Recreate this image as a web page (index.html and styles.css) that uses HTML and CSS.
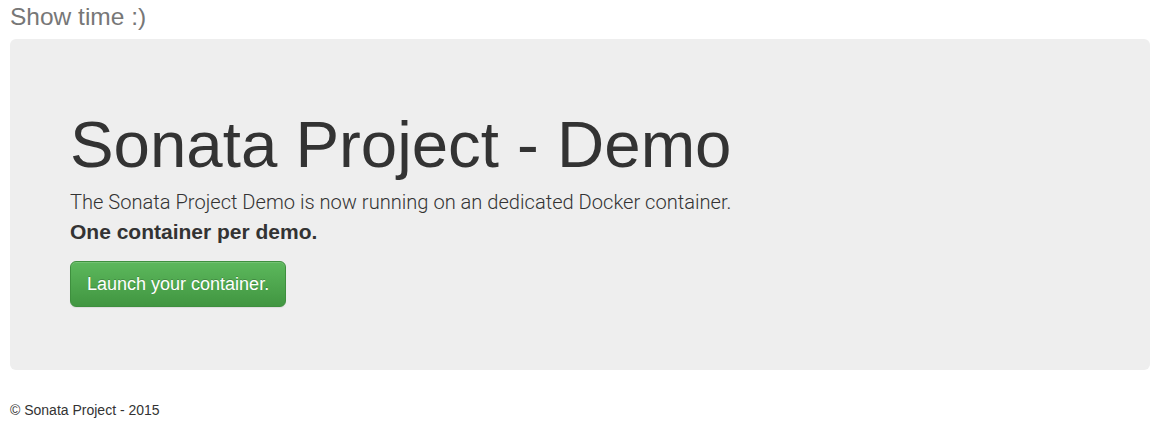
FILE: index.html
```html
<!DOCTYPE html>
<html lang="en">
<head>
<meta charset="utf-8">
<title>Sonata Project - Demo</title>
<link rel="stylesheet" href="styles.css">
</head>
<body>
<div class="page">
  <h3 class="page-title">Show time :)</h3>
  <div class="jumbotron">
    <h1 class="jumbotron-title">Sonata Project - Demo</h1>
    <p class="lead">The Sonata Project Demo is now running on an dedicated Docker container.<br><strong>One container per demo.</strong></p>
    <p class="actions"><a class="btn-launch" href="#">Launch your container.</a></p>
  </div>
  <footer class="footer">© Sonata Project - 2015</footer>
</div>
</body>
</html>
```
FILE: styles.css
```css
html, body {
  margin: 0;
  padding: 0;
  background: #fff;
}
body {
  font-family: "Liberation Sans", Arial, sans-serif;
  font-size: 14px;
  line-height: 20px;
  color: #333;
}
.page {
  width: 1140px;
  padding: 0 0 0 10px;
}
.page-title {
  margin: 0;
  padding-top: 4px;
  font-size: 24.5px;
  line-height: 26px;
  font-weight: normal;
  color: #777;
  margin-bottom: 9px;
}
.jumbotron {
  background: #eeeeee;
  border-radius: 6px;
  padding: 48px 60px;
  margin-bottom: 30px;
}
.jumbotron-title {
  margin: 22px 0 7px;
  font-size: 65.4px;
  line-height: 71px;
  font-weight: normal;
  color: #333;
}
.lead {
  margin: 0 0 14px;
  font-family: "Roboto", "Liberation Sans", sans-serif;
  font-weight: 300;
  font-size: 20.1px;
  line-height: 30px;
  color: #333;
}
.lead strong {
  font-family: "Liberation Sans", Arial, sans-serif;
  font-size: 21px;
  font-weight: bold;
}
.actions {
  margin: 0 0 15px;
}
.btn-launch {
  display: inline-block;
  padding: 10px 16px;
  font-size: 18px;
  line-height: 24px;
  color: #fff;
  text-decoration: none;
  border: 1px solid #3e8f3e;
  border-radius: 6px;
  background-image: linear-gradient(to bottom, #5cb85c 0%, #419641 100%);
  text-shadow: 0 -1px 0 rgba(0, 0, 0, 0.2);
  box-shadow: inset 0 1px 0 rgba(255, 255, 255, 0.15), 0 1px 1px rgba(0, 0, 0, 0.075);
}
.footer {
  font-size: 14px;
  line-height: 20px;
  color: #333;
}
```
